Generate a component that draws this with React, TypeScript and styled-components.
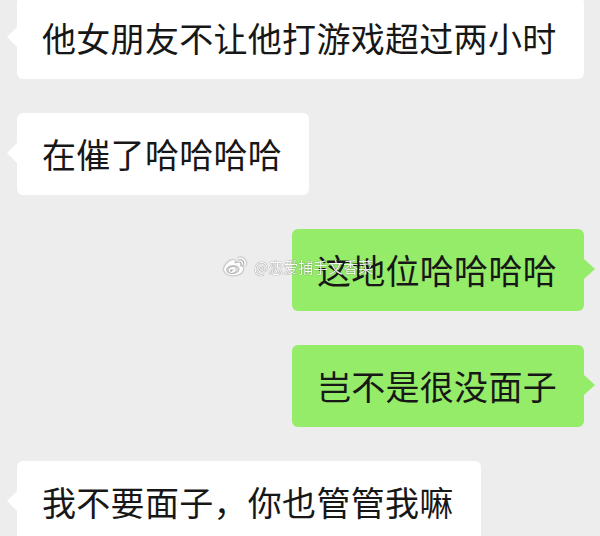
import React from 'react';
import styled, { createGlobalStyle } from 'styled-components';
import { FaWeibo } from 'react-icons/fa';

type Side = 'left' | 'right';

const messages: { id: number; side: Side; text: string }[] = [
  { id: 1, side: 'left', text: '他女朋友不让他打游戏超过两小时' },
  { id: 2, side: 'left', text: '在催了哈哈哈哈' },
  { id: 3, side: 'right', text: '这地位哈哈哈哈' },
  { id: 4, side: 'right', text: '岂不是很没面子' },
  { id: 5, side: 'left', text: '我不要面子，你也管管我嘛' },
];

const App: React.FC = () => {
  return (
    <>
      <GlobalStyle />
      <ChatPage>
        <MessageList>
          {messages.map((m) => (
            <MessageRow key={m.id} side={m.side}>
              <Bubble side={m.side}>{m.text}</Bubble>
            </MessageRow>
          ))}
        </MessageList>
        <Watermark>
          <WeiboMark />
          <WatermarkText>@恋爱捕手文香菜</WatermarkText>
        </Watermark>
      </ChatPage>
    </>
  );
};

const GlobalStyle = createGlobalStyle`
  html, body {
    margin: 0;
    padding: 0;
    background: #ededed;
  }
`;

const ChatPage = styled.div`
  position: relative;
  width: 600px;
  height: 536px;
  overflow: hidden;
  background-color: #ededed;
  font-family: 'Noto Sans CJK SC', 'Noto Sans', sans-serif;
`;

const MessageList = styled.div`
  display: flex;
  flex-direction: column;
  gap: 34px;
  margin-top: -3px;
  padding: 0 16px 0 17px;
`;

const MessageRow = styled.div<{ side: Side }>`
  display: flex;
  justify-content: ${({ side }) => (side === 'left' ? 'flex-start' : 'flex-end')};
`;

const Bubble = styled.div<{ side: Side }>`
  position: relative;
  padding: 21px 27px 21px 25px;
  border-radius: 6px;
  background-color: ${({ side }) => (side === 'left' ? '#ffffff' : '#95ec69')};
  color: #171717;
  font-size: 34px;
  line-height: 40px;
  letter-spacing: 0.3px;
  white-space: nowrap;

  &::before {
    content: '';
    position: absolute;
    top: 30px;
    ${({ side }) => (side === 'left' ? 'left: -10px;' : 'right: -11px;')}
    border-top: 10px solid transparent;
    border-bottom: 10px solid transparent;
    ${({ side }) =>
      side === 'left'
        ? 'border-right: 10px solid #ffffff;'
        : 'border-left: 11px solid #95ec69;'}
  }
`;

const Watermark = styled.div`
  position: absolute;
  left: 222px;
  top: 256px;
  display: flex;
  align-items: center;
  gap: 6px;
  opacity: 0.9;
`;

const WeiboMark = styled(FaWeibo)`
  width: 26px;
  height: 22px;
  color: #ffffff;
  filter: drop-shadow(0 0 1px rgba(0, 0, 0, 0.55));
`;

const WatermarkText = styled.span`
  font-size: 15px;
  line-height: 20px;
  color: #ffffff;
  text-shadow: 0 0 1px rgba(0, 0, 0, 0.5), 0 0 1px rgba(0, 0, 0, 0.4);
`;

export default App;
